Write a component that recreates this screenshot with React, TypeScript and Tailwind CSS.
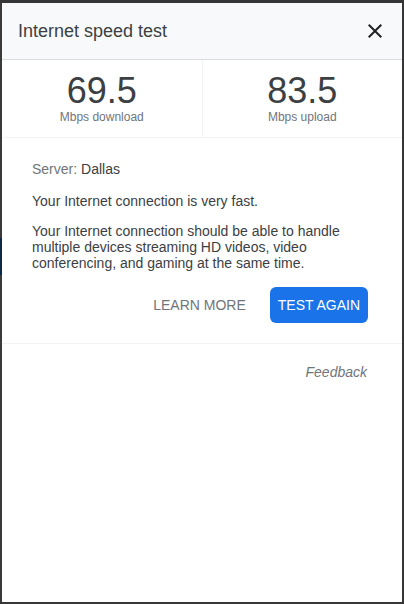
import React from 'react'

const font = { fontFamily: '"Liberation Sans", Arial, sans-serif' }

function CloseIcon() {
  return (
    <svg width="24" height="24" viewBox="0 0 24 24" className="text-[#202124]">
      <path
        d="M19 6.41 17.59 5 12 10.59 6.41 5 5 6.41 10.59 12 5 17.59 6.41 19 12 13.41 17.59 19 19 17.59 13.41 12z"
        fill="currentColor"
      />
    </svg>
  )
}

const Stat: React.FC<{ value: string; label: string }> = ({ value, label }) => {
  return (
    <div className="flex-1 flex flex-col items-center pt-[11px] pb-[14px]">
      <div className="text-[36px] leading-10 text-[#3c4043]">{value}</div>
      <div className="text-xs leading-3 text-[#70757a]">{label}</div>
    </div>
  )
}

function App() {
  return (
    <div className="w-[404px] h-[604px] bg-[#363636] flex pt-[3px] pb-[2px]" style={font}>
      {/* left edge of the page behind */}
      <div className="w-[2px] flex flex-col">
        <div className="h-[235px] bg-[#3a3a3a]"></div>
        <div className="h-[37px] bg-[#0d2746]"></div>
        <div className="flex-1 bg-[#3a3a3a]"></div>
      </div>

      <div className="w-[400px] bg-white flex flex-col">
        <div className="h-[57px] shrink-0 bg-[#f8f9fa] border-b border-[#dadce0] flex items-center justify-between pl-4 pr-[15px]">
          <h1 className="text-[18px] leading-6 text-[#3c4043]">Internet speed test</h1>
          <CloseIcon />
        </div>

        <div className="flex border-b border-[#f1f3f4]">
          <Stat value="69.5" label="Mbps download" />
          <div className="w-px bg-[#f1f3f4]"></div>
          <Stat value="83.5" label="Mbps upload" />
        </div>

        <div className="pl-[30px] pr-[34px] pt-[23px] pb-5 border-b border-[#f1f3f4] text-sm leading-4 text-[#3c4043]">
          <p>
            <span className="text-[#70757a]">Server:</span> Dallas
          </p>
          <p className="mt-4">Your Internet connection is very fast.</p>
          <p className="mt-[14px]">
            Your Internet connection should be able to handle multiple devices streaming HD videos, video
            conferencing, and gaming at the same time.
          </p>
          <div className="mt-4 flex items-center justify-end gap-6">
            <button className="text-sm text-[#70757a]">LEARN MORE</button>
            <button className="h-9 px-2 rounded-md bg-[#1a73e8] text-white text-sm">TEST AGAIN</button>
          </div>
        </div>

        <div className="flex justify-end pr-[35px] pt-5">
          <span className="text-sm leading-4 italic text-[#70757a]">Feedback</span>
        </div>
      </div>

      <div className="w-[2px] bg-[#363636]"></div>
    </div>
  )
}

export default App
